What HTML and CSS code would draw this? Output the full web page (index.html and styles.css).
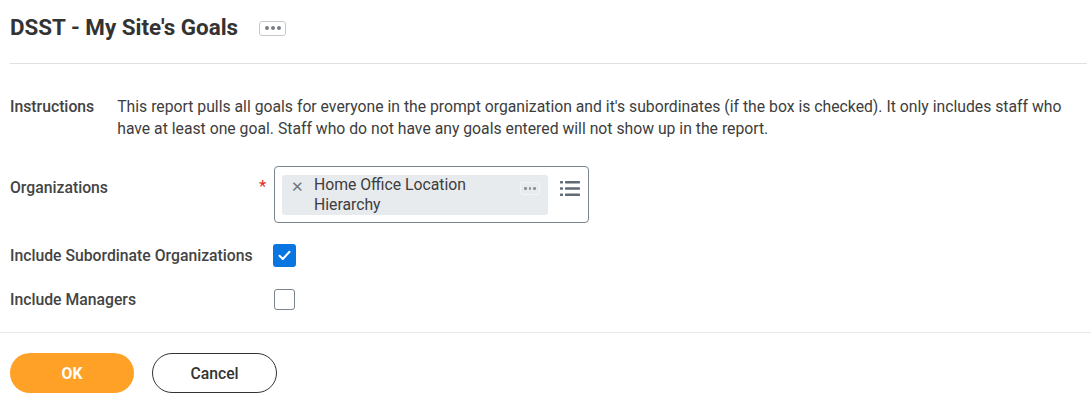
FILE: index.html
```html
<!DOCTYPE html>
<html lang="en">
<head>
<meta charset="utf-8">
<title>DSST - My Site's Goals</title>
<link rel="stylesheet" href="styles.css">
</head>
<body>
<div class="page">
  <header class="header">
    <h1 class="title">DSST - My Site's Goals</h1>
    <button class="related" aria-label="Related actions"><span class="dot"></span><span class="dot"></span><span class="dot"></span></button>
  </header>

  <section class="form">
    <div class="instr-row">
      <div class="instr-label">Instructions</div>
      <div class="instr-text">This report pulls all goals for everyone in the prompt organization and it's subordinates (if the box is checked). It only includes staff who have at least one goal. Staff who do not have any goals entered will not show up in the report.</div>
    </div>

    <div class="row row-org">
      <div class="label label-top">Organizations</div>
      <div class="req">*</div>
      <div class="prompt">
        <div class="pill">
          <span class="pill-x">&#x2715;</span>
          <span class="pill-text">Home Office Location Hierarchy</span>
          <span class="pill-more"><span class="sdot"></span><span class="sdot"></span><span class="sdot"></span></span>
        </div>
        <svg class="list-icon" width="20" height="15" viewBox="0 0 20 15">
          <rect x="0" y="0" width="3" height="2.4" rx="0.6" fill="#5f6b77"/>
          <rect x="5" y="0" width="15" height="2.4" rx="0.6" fill="#5f6b77"/>
          <rect x="0" y="6.3" width="3" height="2.4" rx="0.6" fill="#5f6b77"/>
          <rect x="5" y="6.3" width="15" height="2.4" rx="0.6" fill="#5f6b77"/>
          <rect x="0" y="12.6" width="3" height="2.4" rx="0.6" fill="#5f6b77"/>
          <rect x="5" y="12.6" width="15" height="2.4" rx="0.6" fill="#5f6b77"/>
        </svg>
      </div>
    </div>

    <div class="row row-check">
      <div class="label">Include Subordinate Organizations</div>
      <div class="req"></div>
      <div class="check-wrap">
        <span class="checkbox checked">
          <svg width="13" height="11" viewBox="0 0 13 11"><path d="M1.5 5.8 L4.8 9 L11.5 1.8" fill="none" stroke="#fff" stroke-width="2" stroke-linecap="round" stroke-linejoin="round"/></svg>
        </span>
      </div>
    </div>

    <div class="row row-check">
      <div class="label">Include Managers</div>
      <div class="req"></div>
      <div class="check-wrap">
        <span class="checkbox"></span>
      </div>
    </div>
  </section>

  <footer class="footer">
    <button class="btn btn-ok">OK</button>
    <button class="btn btn-cancel">Cancel</button>
  </footer>
</div>
</body>
</html>
```

FILE: styles.css
```css
* { box-sizing: border-box; }

html, body {
  margin: 0;
  padding: 0;
  background: #ffffff;
}

body {
  font-family: Roboto, "Liberation Sans", Arial, sans-serif;
  font-size: 15.75px;
  color: #333333;
}

.page {
  width: 1091px;
}

.header {
  display: flex;
  align-items: center;
  margin: 0 4px 0 10px;
  padding: 13px 0 22px;
  border-bottom: 1px solid #e0e0e0;
}

.title {
  margin: 0;
  font-size: 22.4px;
  line-height: 28px;
  font-weight: 700;
  color: #333333;
}

.related {
  margin-left: 21px;
  margin-top: 2px;
  width: 27px;
  height: 15px;
  padding: 0;
  border: 1px solid #c6c9cc;
  border-radius: 3px;
  background: #ffffff;
  display: flex;
  align-items: center;
  justify-content: center;
  gap: 2px;
}

.dot {
  width: 4px;
  height: 4px;
  border-radius: 50%;
  background: #7a7f85;
}

.form {
  padding: 32px 0 0 10px;
}

.instr-row {
  display: flex;
  gap: 23px;
  line-height: 22px;
}

.instr-label {
  flex: none;
  color: #444444;
  font-weight: 500;
}

.instr-text {
  color: #3d3d3d;
  padding-right: 10px;
}

.row {
  display: grid;
  grid-template-columns: 249px 15px auto;
  align-items: center;
}

.row-org {
  margin-top: 26px;
  align-items: start;
}

.row-check {
  margin-top: 21px;
  height: 23px;
}

.label {
  color: #444444;
  font-weight: 500;
  line-height: 22px;
  white-space: nowrap;
}

.label-top {
  padding-top: 11px;
}

.req {
  color: #de2e21;
  font-size: 17px;
  line-height: 22px;
  padding-top: 9px;
}

.prompt {
  width: 315px;
  height: 57px;
  border: 1px solid #7b858f;
  border-radius: 4px;
  padding: 8px 8px 8px 7px;
  display: flex;
  align-items: flex-start;
  justify-content: space-between;
}

.pill {
  width: 266px;
  height: 40px;
  background: #e8ebed;
  border-radius: 3px;
  display: flex;
  align-items: flex-start;
  line-height: 20px;
}

.pill-x {
  flex: none;
  width: 32px;
  padding-left: 9px;
  padding-top: 2px;
  font-size: 15px;
  line-height: 20px;
  color: #70777e;
}

.pill-text {
  flex: none;
  width: 190px;
  color: #3d3d3d;
}

.pill-more {
  margin-left: 16px;
  margin-top: 7px;
  width: 20px;
  height: 13px;
  border: 1px solid #f2f4f5;
  border-radius: 2px;
  display: flex;
  align-items: center;
  justify-content: center;
  gap: 2px;
}

.sdot {
  width: 2.5px;
  height: 2.5px;
  border-radius: 50%;
  background: #8b9096;
}

.list-icon {
  margin-top: 6px;
}

.check-wrap {
  width: 23px;
  height: 23px;
  margin-left: -1px;
  display: flex;
  align-items: center;
  justify-content: center;
}

.checkbox {
  flex: none;
  display: flex;
  align-items: center;
  justify-content: center;
  width: 21px;
  height: 21px;
  border: 1px solid #7b858f;
  border-radius: 3px;
  background: #ffffff;
}

.checkbox.checked {
  width: 23px;
  height: 23px;
  border: none;
  background: #0875e1;
}

.footer {
  margin-top: 21px;
  border-top: 1px solid #e8e8e8;
  padding: 20px 0 0 10px;
  display: flex;
  gap: 18px;
}

.btn {
  height: 40px;
  border-radius: 20px;
  font-family: Roboto, "Liberation Sans", Arial, sans-serif;
  font-size: 15.75px;
  font-weight: 700;
  cursor: pointer;
}

.btn-ok {
  width: 124px;
  border: none;
  background: #ffa126;
  color: #ffffff;
}

.btn-cancel {
  width: 125px;
  border: 1px solid #333333;
  background: #ffffff;
  color: #333333;
  font-weight: 500;
}
```
